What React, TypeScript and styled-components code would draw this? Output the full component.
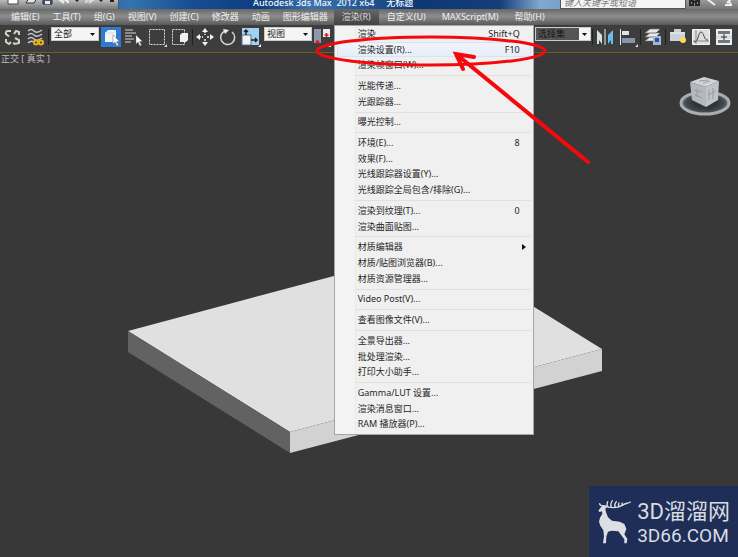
import React from "react";
import styled, { createGlobalStyle } from "styled-components";

const GlobalStyle = createGlobalStyle`
  * { box-sizing: border-box; }
  html, body, #root { height: 100%; }
  body {
    margin: 0;
    overflow: hidden;
    background: #383838;
    font-family: "Noto Sans", "Noto Sans CJK SC", sans-serif;
    font-size: 9px;
    line-height: 12px;
  }
  button, input, select { font: inherit; margin: 0; padding: 0; border: 0; }
`;

const Window = styled.div`
  position: relative;
  min-height: 100vh;
  display: flex;
  flex-direction: column;
`;

/* ---------- Title bar ---------- */
const TitleBar = styled.header`
  display: flex;
  align-items: flex-end;
  height: 9px;
  overflow: hidden;
  background: linear-gradient(90deg, #0b4389 0, #3474b0 130px, #174e91 190px, #0d3d7e 260px, #3974af 310px, #0c3875 420px, #153e79 500px, #82a8ce 540px, #355d91 100%);
`;
const QuickAccess = styled.div`
  display: flex;
  flex: 0 0 119px;
  height: 9px;
  background: linear-gradient(#b9bbbb, #777979);
  border-right: 1px solid #46586d;
`;
const Title = styled.h1`
  flex: 1;
  margin: 0;
  padding-left: 134px;
  color: #f5f8fc;
  font-size: 9px;
  line-height: 12px;
  font-weight: 500;
  white-space: pre;
`;
const SearchInput = styled.input`
  width: 126px;
  height: 14px;
  padding-left: 3px;
  border: 1px solid #555;
  background: #f3f3f3;
  font-style: italic;
  &::placeholder { color: #777; opacity: 1; }
`;
const TitleTools = styled.div`
  display: flex;
  width: 52px;
  height: 9px;
  background: linear-gradient(#999, #777);
`;

/* ---------- Menu bar ---------- */
const MenuBar = styled.nav`
  display: flex;
  height: 16px;
  padding-left: 4px;
  background: linear-gradient(#686868, #8d8d8d 45%, #595959);
`;
const MenuSlot = styled.div`
  position: relative;
  display: flex;
`;
const MenuButton = styled.button<{ $open?: boolean; $tight?: boolean }>`
  padding: ${(p) => (p.$tight ? "0 6px 0 7px" : "0 8px")};
  color: ${(p) => (p.$open ? "#d8d8d8" : "#f0f0f0")};
  background: ${(p) => (p.$open ? "linear-gradient(#666, #444)" : "transparent")};
  white-space: nowrap;
`;
const Menu = styled.div`
  position: absolute;
  z-index: 2;
  top: 100%;
  left: 0;
  display: flex;
  flex-direction: column;
  width: 200px;
  min-height: 410px;
  padding: 0 2px 2px;
  border: 1px solid #a5a5a5;
  background: linear-gradient(90deg, #f3f3f3 20px, #e9e9e9 20px, #e9e9e9 21px, #f0f0f0 21px);
`;
const MenuItem = styled.button<{ $hot?: boolean }>`
  display: flex;
  flex: 1 0 15px;
  align-items: center;
  justify-content: space-between;
  padding: 0 11px 0 21px;
  border-radius: 2px;
  color: #262626;
  background: ${(p) => (p.$hot ? "linear-gradient(#f1f4f9, #e6eef9)" : "transparent")};
  box-shadow: ${(p) => (p.$hot ? "inset 0 0 0 1px #d6e3f2" : "none")};
  text-align: left;
  white-space: nowrap;
`;
const Divider = styled.hr`
  flex: 0 0 1px;
  width: calc(100% - 19px);
  margin: 2px 0 2px 19px;
  border: 0;
  background: #e0e0e0;
`;
const SubmenuArrow = styled.svg`
  width: 4px;
  height: 6px;
  margin-right: -6px;
`;

/* ---------- Toolbar ---------- */
const Toolbar = styled.div`
  display: flex;
  justify-content: space-between;
  height: 28px;
  padding: 2px 4px 0 3px;
  background: #3d3d3d;
  border-bottom: 1px solid #6e5d27;
`;
const ToolGroup = styled.div`
  display: flex;
  align-items: flex-start;
  gap: 3px;
`;
const ToolButton = styled.button<{ $active?: boolean }>`
  width: 20px;
  height: 20px;
  background: ${(p) => (p.$active ? "#2d7bd5" : "transparent")};
  svg { display: block; width: 20px; height: 20px; }
`;
const Separator = styled.span`
  width: 1px;
  height: 16px;
  margin: 2px -1px 0;
  background: #1f1f1f;
`;
const SelectBox = styled.label<{ $dark?: boolean }>`
  position: relative;
  display: flex;
  width: ${(p) => (p.$dark ? "56px" : "48px")};
  height: 14px;
  margin-right: -1px;
  border: 1px solid #c9c9c9;
  background: ${(p) => (p.$dark ? "#555" : "#f5f5f5")};
  select {
    appearance: none;
    width: 100%;
    padding-left: 2px;
    background: transparent;
    color: ${(p) => (p.$dark ? "#161616" : "#222")};
    line-height: 12px;
  }
  svg {
    position: absolute;
    right: 0;
    top: 0;
    width: 11px;
    height: 12px;
    background: #f5f5f5;
    pointer-events: none;
  }
`;

/* ---------- Viewport ---------- */
const Viewport = styled.main`
  position: relative;
  flex: 1;
  background: #383838;
`;
const ViewLabel = styled.p`
  margin: 0;
  padding: 0 1px;
  color: #bcbcbc;
  white-space: pre;
`;
const Scene = styled.svg`
  position: absolute;
  top: 0;
  left: 0;
  width: 100%;
`;
const Annotation = styled.svg`
  position: absolute;
  z-index: 3;
  top: 0;
  left: 0;
  width: 100%;
  pointer-events: none;
`;
const Watermark = styled.aside`
  position: absolute;
  right: 0;
  bottom: 0;
  display: flex;
  align-items: center;
  gap: 5px;
  padding: 12px 8px 11px 8px;
  color: #d9dce2;
  background: #1f2e57;
  svg { width: 35px; height: 47px; }
`;
const BrandText = styled.div`
  display: flex;
  flex-direction: column;
  white-space: nowrap;
`;
const BrandName = styled.strong`
  font: 400 22px/28px "Roboto", "Noto Sans CJK SC", sans-serif;
`;
const BrandUrl = styled.span`
  font: 400 19px/20px "Roboto", sans-serif;
`;

type Entry = { label: string; key?: string; hot?: boolean; sub?: boolean };
const groups: Entry[][] = [
  [{ label: "渲染", key: "Shift+Q" }, { label: "渲染设置(R)...", key: "F10", hot: true }, { label: "渲染帧窗口(W)..." }],
  [{ label: "光能传递..." }, { label: "光跟踪器..." }],
  [{ label: "曝光控制..." }],
  [{ label: "环境(E)...", key: "8" }, { label: "效果(F)..." }, { label: "光线跟踪器设置(Y)..." }, { label: "光线跟踪全局包含/排除(G)..." }],
  [{ label: "渲染到纹理(T)...", key: "0" }, { label: "渲染曲面贴图..." }],
  [{ label: "材质编辑器", sub: true }, { label: "材质/贴图浏览器(B)..." }, { label: "材质资源管理器..." }],
  [{ label: "Video Post(V)..." }],
  [{ label: "查看图像文件(V)..." }],
  [{ label: "全景导出器..." }, { label: "批处理渲染..." }, { label: "打印大小助手..." }],
  [{ label: "Gamma/LUT 设置..." }, { label: "渲染消息窗口..." }, { label: "RAM 播放器(P)..." }],
];

const menusBefore = ["编辑(E)", "工具(T)", "组(G)", "视图(V)", "创建(C)", "修改器", "动画", "图形编辑器"];
const menusAfter = ["自定义(U)", "MAXScript(M)", "帮助(H)"];

const Tool = ({ name, active, children }: { name: string; active?: boolean; children: React.ReactNode }) => (
  <ToolButton type="button" aria-label={name} $active={active}>
    <svg viewBox="0 0 20 20" fill="none">{children}</svg>
  </ToolButton>
);

const Picker = ({ name, value, dark }: { name: string; value: string; dark?: boolean }) => (
  <SelectBox $dark={dark}>
    <select aria-label={name} defaultValue={value}>
      <option>{value}</option>
    </select>
    <svg viewBox="0 0 11 12"><path d="M3 5h5L5.500 8z" fill="#111" /></svg>
  </SelectBox>
);

const RenderMenu = () => (
  <Menu role="menu" aria-label="渲染">
    {groups.map((group, i) => (
      <React.Fragment key={i}>
        {i > 0 && <Divider />}
        {group.map((item) => (
          <MenuItem key={item.label} type="button" role="menuitem" $hot={item.hot}>
            <span>{item.label}</span>
            {item.key && <span>{item.key}</span>}
            {item.sub && <SubmenuArrow viewBox="0 0 4 6"><path d="M0 0l4 3-4 3z" fill="#111" /></SubmenuArrow>}
          </MenuItem>
        ))}
      </React.Fragment>
    ))}
  </Menu>
);

const Cursor = () => <path d="M12 8v9l2-2 2 4 1.500-1-2-3.500h3z" fill="#fff" stroke="#666" strokeWidth=".4" />;

export default function App() {
  return (
    <Window>
      <GlobalStyle />
      <TitleBar>
        <QuickAccess>
          <svg width="118" height="9" viewBox="0 0 118 9" fill="none">
            <path d="M8-2h10v6H8z" fill="#fff" stroke="#444" />
            <path d="M26 3l3-5h8l-3 5z" fill="#e4e4e4" stroke="#333" />
            <path d="M43-2h9v6h-9z" fill="#445372" stroke="#222a3c" />
            <path d="M45 1h5v3h-5z" fill="#e9e9e9" />
            <path d="M68 3c0-3-3-4-6-3M65-3l-5 3 4 3" stroke="#f3f3f3" strokeWidth="2" />
            <path d="M86 3c0-3 3-4 6-3M88-3l5 3-4 3" stroke="#ddd" strokeWidth="2" />
            <path d="M75 0h4l-2 2zM99 0h4l-2 2zM110-1h4v3h-4z" fill="#222" />
          </svg>
        </QuickAccess>
        <Title>Autodesk 3ds Max  2012 x64     无标题</Title>
        <SearchInput aria-label="搜索" placeholder="键入关键字或短语" />
        <TitleTools>
          <svg width="52" height="9" viewBox="0 0 52 9" fill="none">
            <path d="M4 5V1h3v4zM10 5V1h3v4zM7 2h3" stroke="#282828" strokeWidth="2" />
            <path d="M21-1l8 6M39 5h7M42 1l3 3M45-1l-4 4" stroke="#eee" strokeWidth="2" />
          </svg>
        </TitleTools>
      </TitleBar>

      <MenuBar aria-label="主菜单">
        {menusBefore.map((m) => <MenuButton key={m} type="button" $tight>{m}</MenuButton>)}
        <MenuSlot>
          <MenuButton type="button" aria-haspopup="menu" aria-expanded="true" $open>渲染(R)</MenuButton>
          <RenderMenu />
        </MenuSlot>
        {menusAfter.map((m) => <MenuButton key={m} type="button">{m}</MenuButton>)}
      </MenuBar>

      <Toolbar>
        <ToolGroup>
          <Tool name="断开链接">
            <g stroke="#d6d1c0" strokeWidth="2">
              <path d="M8 4H4.500A2 2 0 0 0 3 7l3 2.500" />
              <path d="M11 7l2-3 3 1v3" />
              <path d="M3 12v3l3 2 2-2" />
              <path d="M12 11l4 2v3l-4 1-2-1" />
            </g>
          </Tool>
          <Tool name="绑定到空间扭曲">
            <path d="M2 4q3-3 6 0t8-1M2 8q3-3 6 0t8-1M2 12q3-3 6 0t8-1M2 16q3-3 6-1" stroke="#c2c6c8" strokeWidth="1.500" />
            <circle cx="10" cy="15.500" r="2" stroke="#e9b414" strokeWidth="2" /><circle cx="15" cy="15.500" r="2" stroke="#e9b414" strokeWidth="2" />
          </Tool>
          <Separator />
          <Picker name="选择过滤器" value="全部" />
          <Tool name="选择对象" active>
            <path d="M4 6l3-3h8v9l-3 3H4z" fill="#f3f3f3" /><path d="M4 6h8l3-3M12 6v9" stroke="#d5dce6" /><Cursor />
          </Tool>
          <Tool name="按名称选择">
            <path d="M1 3h8M1 6h11M1 9h7M1 12h9M1 15h6" stroke="#d8d8d8" /><Cursor />
          </Tool>
          <Tool name="矩形选择区域">
            <path d="M2.500 2.500h15v15h-15z" stroke="#ddd" strokeDasharray="2 1" /><path d="M17 20l3-3v3z" fill="#ddd" />
          </Tool>
          <Tool name="窗口交叉">
            <path d="M2.500 2.500h12v15h-12z" stroke="#ddd" strokeDasharray="2 1" /><path d="M10 8l2-2h6v7l-2 2h-6z" fill="#f0f0f0" />
          </Tool>
          <Separator />
          <Tool name="移动">
            <path d="M10 4v4M10 12v4M4 10h4M12 10h4" stroke="#f1f1f1" strokeWidth="1.500" strokeDasharray="2 1" />
            <path d="M10 1l3 4H7zM10 19l3-4H7zM1 10l4-3v6zM19 10l-4-3v6z" fill="#f4f4f4" />
          </Tool>
          <Tool name="旋转">
            <path d="M7 4a7 7 0 1 0 7 1" stroke="#d9d9d9" strokeWidth="1.500" /><path d="M5 2l6 1-4 4z" fill="#eee" />
          </Tool>
          <Tool name="缩放">
            <path d="M1 1h17v17H1z" fill="#a4d2ee" /><path d="M1 8h9v10H1z" fill="#f3f3f3" stroke="#50718a" />
            <path d="M5 8V3M3 5l2-2 2 2M10 13h6M14 11l2 2-2 2" stroke="#182536" strokeWidth="1.500" /><path d="M17 20l3-3v3z" fill="#fff" />
          </Tool>
          <Picker name="参考坐标系" value="视图" />
          <Tool name="使用轴点中心">
            <path d="M0 2h7v14H0z" fill="#8e98aa" /><path d="M9 2h7v8H9z" fill="#e9edf1" />
            <path d="M3.500 13v4M1.500 15h4M12.500 6v4M10.500 8h4" stroke="#e01318" strokeWidth="1.500" /><path d="M14 20l3-3v3z" fill="#ddd" />
          </Tool>
        </ToolGroup>
        <ToolGroup>
          <Picker name="命名选择集" value="选择集" dark />
          <Separator />
          <Tool name="镜像">
            <path d="M2 3l5 5v9l-3-4v4H2z" fill="#d8e1e3" /><path d="M18 3l-5 5v9l3-4v4h2z" fill="#6abdee" /><path d="M10 2v16" stroke="#eee" />
          </Tool>
          <Tool name="对齐">
            <path d="M2.500 2v16" stroke="#e9e9e9" /><path d="M4 4h7v4H4z" fill="#dfe3e9" /><path d="M4 11h13v5H4z" fill="#8993a7" /><path d="M17 20l3-3v3z" fill="#ddd" />
          </Tool>
          <Separator />
          <Tool name="层管理器">
            <path d="M2 14l5-4h10l-4 4zM2 10l5-4h10l-4 4zM2 6l5-4h10l-4 4z" fill="#e8e8e8" stroke="#777" strokeWidth=".6" />
            <path d="M10 9h8v9h-8z" fill="#9bb9d7" /><path d="M12 11h4v4h-4z" fill="#285491" />
          </Tool>
          <Separator />
          <Tool name="石墨建模工具">
            <path d="M2 5h4V2h7v3h4v9H2z" fill="#cbd1da" /><path d="M2 6h15" stroke="#edf0f3" /><circle cx="15" cy="13" r="3" fill="#ffda58" />
          </Tool>
          <Tool name="曲线编辑器">
            <path d="M1.500 2.500h17v15h-17z" fill="#dedede" stroke="#f3f3f3" /><path d="M5 3v14M2 14h16" stroke="#888" /><path d="M3 15C8 15 7 5 10 5s3 9 7 8" stroke="#444" />
          </Tool>
          <Tool name="图解视图">
            <path d="M2 2h16v6H2zM2 12h16v6H2z" fill="#eee" /><path d="M4 4h12v3H4zM4 13h12v3H4z" fill="#6f7780" /><path d="M2 8h16v4H2z" fill="#ddd" /><path d="M10 7v6M7 10h6" stroke="#333" />
          </Tool>
        </ToolGroup>
      </Toolbar>

      <Viewport>
        <ViewLabel>正交 [ 真实 ]</ViewLabel>
        <Scene viewBox="0 53 738 504" role="img" aria-label="平板模型">
          <defs>
            <radialGradient id="ring"><stop offset="45%" stopColor="#303437" /><stop offset="80%" stopColor="#444a4d" /><stop offset="100%" stopColor="#777d80" /></radialGradient>
          </defs>
          <path d="M128 331L439 248 602 349 290 432z" fill="#e0e0e0" />
          <path d="M128 331L290 432V453L128 352z" fill="#626262" />
          <path d="M290 432L602 349V371L290 453z" fill="#d2d2d2" />
          <ellipse cx="705" cy="103" rx="24" ry="11" fill="url(#ring)" stroke="#a9aeb1" strokeWidth="3" />
          <path d="M690 82l14-5 15 4-13 6z" fill="#d1d4d9" />
          <path d="M690 82l16 5v20l-14-7z" fill="#b4b8bf" />
          <path d="M706 87l13-6-1 19-12 7z" fill="#c0c4ca" />
          <path d="M699 81l9-1M703 83l7-2M694 90l8 2M695 95l7 3M697 89v8M709 90v10M713 88v11M708 95l8-4" stroke="#969ca6" />
        </Scene>
      </Viewport>

      <Annotation viewBox="0 0 738 557" fill="none" stroke="#f40a0c" strokeWidth="3" aria-hidden="true">
        <ellipse cx="431" cy="51" rx="114" ry="14" />
        <path d="M588 162L456 54M474 57L456 54L463 69" strokeWidth="4" strokeLinecap="round" />
      </Annotation>

      <Watermark>
        <svg viewBox="18 28 105 141" fill="#dddfe4">
          <path d="M22 63L31 51 38 48 48 52 43 57 45 68 51 83 63 93 86 96 100 103 106 117 103 126 100 134 109 148 107 161H100L100 149 90 135 82 125 62 123 51 126 46 141 45 161H36L39 140 37 122 28 108 24 96 27 84 34 72 33 65 26 67z" />
          <path d="M39 48C55 56 80 56 92 48S108 42 118 37M36 49C29 48 26 44 26 42M52 52C45 47 48 42 50 36M62 53C56 46 60 40 64 33M73 53C68 46 72 42 76 36M85 51C80 47 82 44 84 40M95 47C92 45 92 43 94 40" fill="none" stroke="#dddfe4" strokeWidth="4" strokeLinecap="round" />
        </svg>
        <BrandText>
          <BrandName>3D溜溜网</BrandName>
          <BrandUrl>3D66.COM</BrandUrl>
        </BrandText>
      </Watermark>
    </Window>
  );
}
